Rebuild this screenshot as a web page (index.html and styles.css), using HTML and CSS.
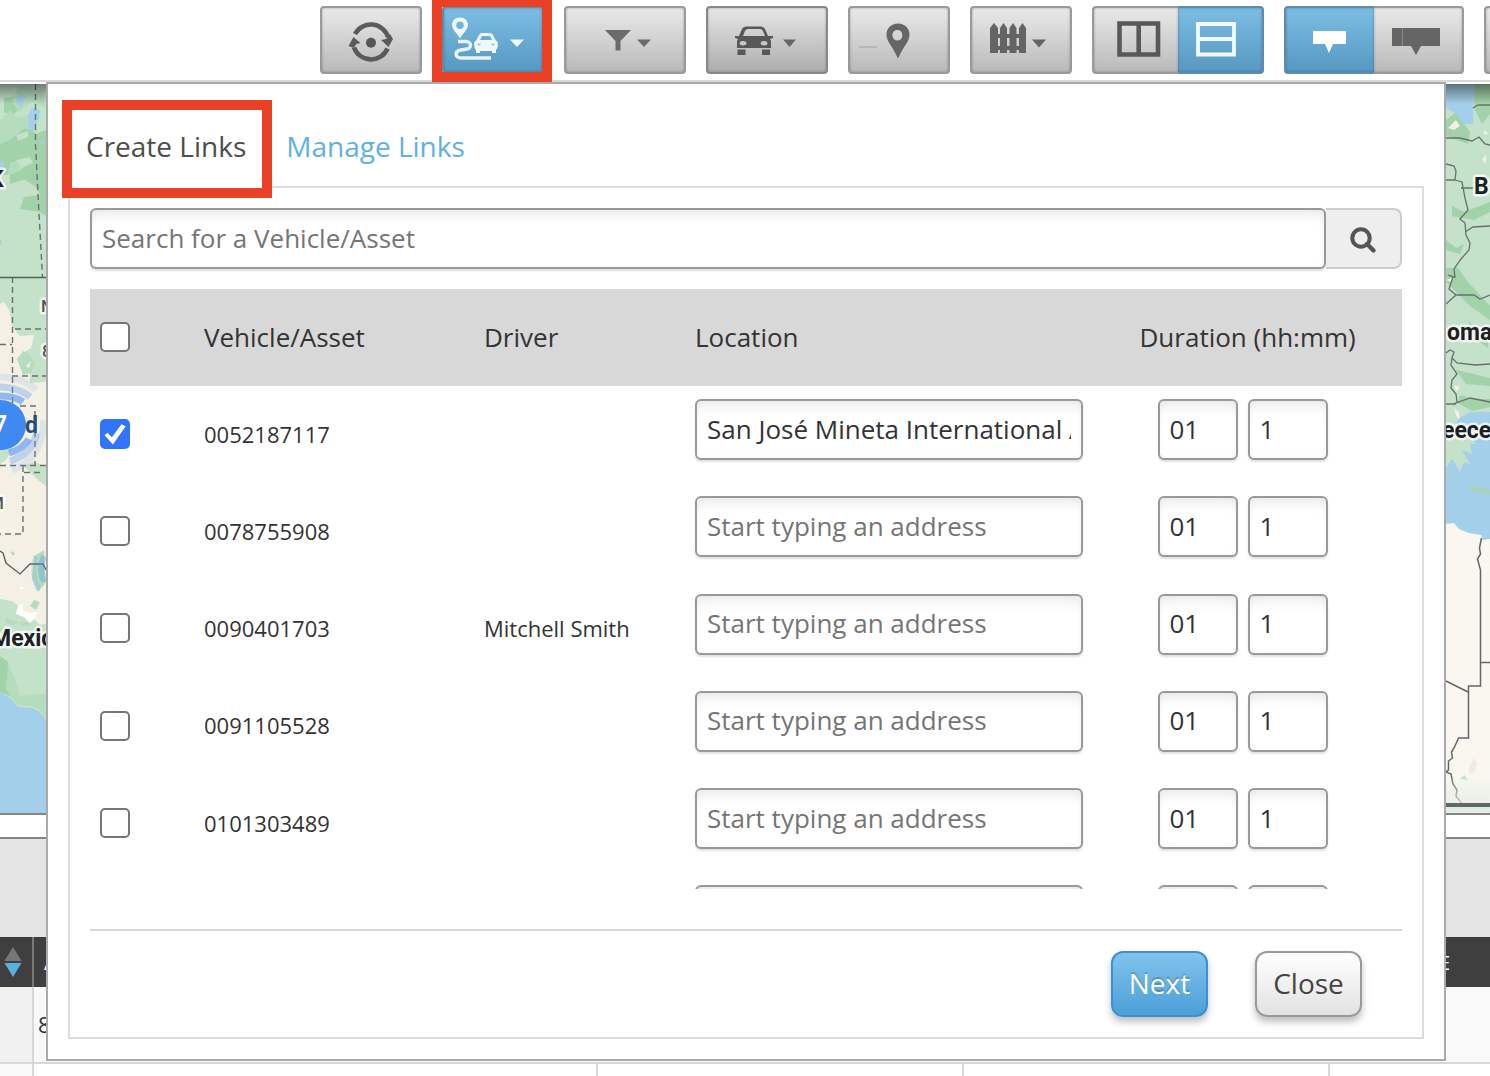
FILE: index.html
```html
<!DOCTYPE html>
<html lang="en">
<head>
<meta charset="utf-8">
<title>Create Links</title>
<link rel="stylesheet" href="styles.css">
</head>
<body>
<div class="page">
  <header class="toolbar">
    <button class="tool w102" aria-label="Refresh"><svg viewBox="322 8 98 64"><g fill="none" stroke="#5a5a5a" stroke-width="4.600"><path d="M355 34A18 18 0 0 1 388 37"/><path d="M387.500 48.500A18 18 0 0 1 354 47.500"/></g><path fill="#5a5a5a" d="M381 40l5-1 4-5 3 5-4.500 8zM348.500 46l5-9 7 6-4 1-3 4z"/><circle cx="371" cy="42.700" r="5" fill="#555"/></svg></button>
    <button class="tool w102 on" aria-label="Links"><svg viewBox="444 8 98 64"><path fill="#f1f8fc" fill-rule="evenodd" d="M460 17.500c5 0 8 3.500 8 7.500 0 4.500-5 8-8 13.500-3-5.500-8-9-8-13.500 0-4 3-7.500 8-7.500zm0 4a3.700 3.700 0 1 0 0 7.500 3.700 3.700 0 0 0 0-7.500z"/><path d="M458 41.500h8c6 0 6 7.500 0 7.800l-5 .7c-7 1-6 8 0 8h30" fill="none" stroke="#e8f4fa" stroke-width="3.400"/><path fill="#f1f8fc" fill-rule="evenodd" d="M476.500 40l2.500-5q1-2 3-2h8q2 0 3 2l2.500 5q2.500 1.500 2.500 4 0 4-2 6v3h-4v-2h-12v2h-4v-3q-2-2-2-6 0-2.500 2.500-4zm3.500 0h12l-2-4h-8z"/><path fill="#9ccae5" d="M477.500 43.500h3v2h-3zM491.500 43.500h3v2h-3z"/><path fill="#f1f8fc" d="M510 39.500h14l-7 7.500z"/></svg></button>
    <button class="tool w122" aria-label="Filter"><svg viewBox="566 8 118 64"><path fill="#6b6b6b" d="M605 30h26l-10.500 11v9.500h-5V41zM637 39.500h14l-7 7.500z"/></svg></button>
    <button class="tool w122 dark" aria-label="Vehicles"><svg viewBox="708 8 118 64"><path fill="#585858" fill-rule="evenodd" d="M739 36l3-7q1-2.500 4-2.500h15q3 0 4 2.500l3 7 5 0v2l-3 1 1 2v7h-34v-7l1-2-3-1v-2zm4 0h22l-2-5q-1-2-3-2h-12q-2 0-3 2zm0 5a3 2 0 1 0 .1 4.500 3 2 0 0 0-.1-4.500zm21 0a3 2 0 1 0 .1 4.500 3 2 0 0 0-.1-4.500zM737.500 49.500h8v5.500h-8zM762 49.500h8v5.500h-8z"/><path fill="#666" d="M783 39.500h13l-6.500 7.500z"/></svg></button>
    <button class="tool w102" aria-label="Places"><svg viewBox="850 8 98 64"><path fill="#666" fill-rule="evenodd" d="M898 23.500c7 0 11.500 5 11.500 11 0 7-5 10-11.500 24-6.500-14-11.500-17-11.500-24 0-6 4.500-11 11.500-11zm0 6.500a5 5.300 0 1 0 0 10.500 5 5.300 0 0 0 0-10.500z"/><path stroke="#aaa" stroke-width="1.300" d="M859 47h18"/></svg></button>
    <button class="tool w102" aria-label="Fences"><svg viewBox="972 8 98 64"><path fill="#646464" d="M990 53V28l4-5 4 5v25zM1000 53V28l3.500-5 3.500 5v25zM1009.500 53V28l3.500-5 3.500 5v25zM1019 53V28l3.500-5 3.500 5v25zM990 34h35v4h-35zM990 46h35v4h-35zM1032 39.500h14l-7 8z"/></svg></button>
    <div class="group">
      <button class="tool w86 first" aria-label="Columns"><svg viewBox="1094 8 84 64"><path fill="none" stroke="#585858" stroke-width="4.600" d="M1119.500 23.500h38.500v31h-38.500zM1138.700 23v32"/></svg></button>
      <button class="tool w86 on last" aria-label="Rows"><svg viewBox="1178 8 84 64"><path fill="none" stroke="#f3f9fc" stroke-width="3.800" d="M1198 24h36v30.500h-36zM1198 39h36"/></svg></button>
    </div>
    <div class="group">
      <button class="tool w90 on first" aria-label="Short label"><svg viewBox="1286 8 88 64"><path fill="#fff" d="M1313 31h33v13h-13l-4 9-4-9h-12z"/></svg></button>
      <button class="tool w90 last" aria-label="Long label"><svg viewBox="1374 8 88 64"><path fill="#656565" d="M1392 28h48v18h-19l-5 9-5-9h-19z"/><path stroke="#8a8a8a" d="M1402.500 28v18"/></svg></button>
    </div>
    <button class="tool w102" aria-label="More"></button>
  </header>

  <main class="backdrop">
    <svg class="map" viewBox="0 84 1490 729" width="1490" height="729">
      <defs>
        <linearGradient id="shade" x1="0" y1="0" x2="0" y2="1"><stop offset="0" stop-color="#000" stop-opacity=".45"/><stop offset="1" stop-color="#000" stop-opacity="0"/></linearGradient>
        <linearGradient id="fade" x1="0" y1="0" x2="0" y2="1"><stop offset="0" stop-color="#e4eee5" stop-opacity="0"/><stop offset="1" stop-color="#e4eee5"/></linearGradient>
      </defs>
      <rect y="84" width="48" height="729" fill="#c3e2c9"/>
      <path fill="#f5f0e5" d="M0 304l4-2 6 10 2 14 8 10 14-1-2 10-8 6 6 14 0 18 16-1v20l2 14v207l-8 2-10-10-10-8-8-6-12-2z"/>
      <path fill="#c3e2c9" d="M0 464l6-4 7-12-5-5-8 6zM24 466l10-4 12 4v20l-8-6zM0 438l8-2 4 6-12 6z"/>
      <path fill="#a1d2a9" d="M0 130l10-6 6 10 12-8 8 8 10-4v44l-10 4-14 2-12 4v-10l-12 2zM26 140l12-6 8 4v78l-6-4-20-3 4-12 16-2-4-8-12-8zM4 98l12-2 4 12-8 8-8-4z"/>
      <path fill="#b5dcbc" d="M20 86l22 4 4 18-14-6-14 10-6-12zM0 120l10-10 8 8 14-4 6 18-14-4-14 12-10 4zM10 163l12-4 4 6-6 6-12 4z"/>
      <path fill="#c3e2c9" d="M16 160l14-3 3 6-12 5zM16 135l12-4 0 6-10 4z"/>
      <path fill="#a4cfea" d="M17 96l10-2-6 14-5-6zM32 108l8 2-1 8-6 13h-4l-1-16zM0 162l4-1v8l-4 2zM0 238l2 8-2-3zM40 143l3-4v5z"/>
      <path fill="#b5dcbc" d="M17 359l8-10 4 6 6 8-4 10-8 2zM34 556l10-6 2 32-8 10-6-14zM34 600l6 2-4 8-6-4zM10 551l5 2-2 3z"/>
      <path fill="#f5f0e5" d="M18 348l5-8 10-2-2 10-6 4zM26 366l5-5-2 7z"/>
      <path fill="#b5dcbc" d="M6 618l12 4-4 3-8-2zM20 622l8 0 2 4-8 0zM0 628l10 0 6 6-16 2z"/>
      <path fill="#fff" d="M18 606l5-3v7l6 3 8-1-2 6-5 5-6-6-8-3zM20 585l5 4-5 0z"/>
      <path fill="#c3e2c9" d="M0 648l14 0 10 8 10 8 7 6 5 3v44H0z"/>
      <path fill="#a1d2a9" d="M0 656l8 6 1 14 4 14-3 6-10-4z"/>
      <path fill="#b5dcbc" d="M8 664l4 8 4 10 4 14 26-2v24l-6-8-8-4-14-1-8-9-4-8z"/>
      <path fill="#a4cfea" d="M0 692l10 6 8 9 14 1 8 4 6 8v93H0z"/>
      <g fill="none" stroke="#6a716f" stroke-width="1.400" stroke-dasharray="6 4"><path d="M35.500 84v60l3 60 4 73M12.500 277v126M15 329h31M0 344.500h12M12 376h34M0 465.500h46M23 466v68H0M24 472.500h20M20 406h15v60"/></g>
      <path fill="none" stroke="#555d5e" stroke-width="1.300" d="M0 277.500h46M0 551l3 2 3 10 14 11 10-10h13l3 6"/>
      <g fill="none" stroke="#5a9af5"><g stroke-width="7"><path d="M0 396c12 0 18 2 23 6" stroke-opacity=".65"/><path d="M0 387c16 0 24 5 30 10" stroke-opacity=".35"/><path d="M0 377c20 0 30 7 36 13" stroke-opacity=".14"/><path d="M29 439q-6 10-20 14" stroke-opacity=".65"/><path d="M37 433q-6 22-27 28" stroke-opacity=".35"/><path d="M44 420q-2 40-32 50" stroke-opacity=".14"/></g><path d="M44 556q-6 14 0 26" stroke-width="6" stroke-opacity=".4"/><path d="M36 556q-6 18 3 34" stroke-width="5" stroke-opacity=".2"/></g>
      <circle cx="1" cy="425" r="25" fill="#3f89f2"/>
      <g class="map-label" stroke="#fff" stroke-opacity=".75" stroke-width="5" stroke-linejoin="round" paint-order="stroke">
        <text x="-6" y="432" class="b" style="fill:#fff;stroke:none">7</text>
        <text x="25" y="433" class="b" style="fill:#284b76;stroke:none">d</text>
        <text x="41" y="312" class="s">N</text><text x="42" y="357" class="s">8</text><text x="-11" y="509" class="s">M</text>
        <text x="-11" y="187" class="b">K</text>
        <text x="-9" y="646" class="b">Mexico</text>
      </g>

      <rect x="1444" y="84" width="46" height="729" fill="#c3e2c9"/>
      <path fill="#a1d2a9" d="M1446 120l10-8 14 20-2 12-22-8zM1474 84h16v30l-8 10-8-16zM1446 268l12 0 10 14 22 24v14l-20-14-24-24zM1452 206l12 6 26-10v10l-16 8-22-4zM1446 240l10 8 8-4-4 10-14-4zM1468 320l10 14 10 8v6l-16-12zM1456 370l18 4 16 4v8l-24-2zM1460 395l12 4 18 0v8l-18 4-14-8z"/>
      <path fill="#f5f0e5" d="M1448 128l8-8 4 6-6 4zM1484 130l5 4-5 0zM1482 160l4-6v10zM1446 280l6-2v4zM1454 408l5 4 1 8-4-4zM1454 385l6 2-4 5z"/>
      <path fill="#a4cfea" d="M1446 84h28l-1 40-10 0-6-10-11-6zM1453 426l7-8 10-6 20 0v135l-16-5-14-6-14-4v-68l8-6z"/>
      <path fill="#c3e2c9" d="M1446 426l8-8 4 8 10 6 8 12-6 0 2 10-10-4 8 14-6-2-4 10-8-14-6 10z"/>
      <path fill="#a8d2bb" d="M1465 486l10 0 15 4v4l-14-1z"/>
      <path fill="#faf7f1" d="M1446 524l8-1 5 6 10 4 12 2 2 5 7-1v268h-44z"/>
      <path fill="#f0ebdc" d="M1469 768l5-10 3 4-2 10-6 2z"/><path fill="#c3e2c9" d="M1460 779l4-4 4 5zM1446 523h5v1h-5z"/>
      <g fill="none" stroke="#68706f" stroke-width="1.300"><path d="M1473 108l5-3h12M1446 138h14l12 3 7-4 6 7 5 1M1446 164l8 2 2 5-1 9h-9M1455 180l7 2 3 16 3 12-8 9 5 4 1 12 4 8-1 7-8 9-7 10 1 8-7-2M1461 188h12M1465 232l8-5 17-1M1453 277l-4 12 7 6-10 9M1456 295l6 0 12 0 6 4 10-4M1446 353l4-3 4 2-2 6 5 5 18 2 15-1M1452 358l-1 7 6 9-5 6-1 8 5 6 1 8-3 3M1446 404h7l17-6 20 4"/></g>
      <g fill="none" stroke="#61676b" stroke-width="1.500"><path d="M1481.500 538l-2 10 1 6-3 5 3 11v116h-12v52h-10l-4 9-3 5 1 6-4 3v9l-3 2M1480 662.500h10M1446 681l22 11M1446 772l5 2 2 10 4 6-1 6 8 10"/></g>
      <rect x="1446" y="774" width="44" height="39" fill="url(#fade)"/>
      <rect x="1446" y="803" width="44" height="4" fill="#666"/>
      <g class="map-label" stroke="#fff" stroke-opacity=".75" stroke-width="5" stroke-linejoin="round" paint-order="stroke">
        <text x="1474" y="194" class="b">B</text><text x="1447" y="340" class="b">omania</text><text x="1442" y="438" class="b">eece</text>
      </g>
      <rect y="84" width="1490" height="20" fill="url(#shade)"/>
    </svg>
    <div class="splitter"></div>
    <div class="filters"></div>
    <div class="grid-head"><div class="sort"><svg viewBox="0 0 18 32" width="18" height="32"><path fill="#777" d="M9 1l8.500 14H.5z"/><path fill="#5bafe0" d="M.5 17h17L9 31z"/></svg></div><div class="col-a">A</div><div class="col-e">E</div></div>
    <div class="grid-row"><div class="rownum"></div><div class="cell">8</div></div>
    <div class="grid-row next"><div class="rownum"></div><div class="cell c1"></div><div class="cell c2"></div><div class="cell c3"></div><div class="cell c4"></div></div>
  </main>

  <section class="dialog">
    <nav class="tabs"><a class="tab active">Create Links</a><a class="tab">Manage Links</a></nav>
    <div class="panel">
      <div class="search"><input class="field" type="text" placeholder="Search for a Vehicle/Asset"><button class="search-btn" aria-label="Search"><svg viewBox="0 0 28 28" width="28" height="28"><circle cx="12" cy="12" r="8.700" fill="none" stroke="#555" stroke-width="4"/><path d="M18 18l6.500 6.500" stroke="#555" stroke-width="4.400" stroke-linecap="round"/></svg></button></div>
      <div class="row head"><input class="check" type="checkbox"><span>Vehicle/Asset</span><span>Driver</span><span>Location</span><span>Duration (hh:mm)</span></div>
      <div class="rows">
        <div class="row"><input class="check" type="checkbox" checked><span>0052187117</span><span></span><input class="field" value="San José Mineta International Airport"><div class="duration"><input class="field" value="01"><input class="field" value="1"></div></div>
        <div class="row"><input class="check" type="checkbox"><span>0078755908</span><span></span><input class="field" placeholder="Start typing an address"><div class="duration"><input class="field" value="01"><input class="field" value="1"></div></div>
        <div class="row"><input class="check" type="checkbox"><span>0090401703</span><span>Mitchell Smith</span><input class="field" placeholder="Start typing an address"><div class="duration"><input class="field" value="01"><input class="field" value="1"></div></div>
        <div class="row"><input class="check" type="checkbox"><span>0091105528</span><span></span><input class="field" placeholder="Start typing an address"><div class="duration"><input class="field" value="01"><input class="field" value="1"></div></div>
        <div class="row"><input class="check" type="checkbox"><span>0101303489</span><span></span><input class="field" placeholder="Start typing an address"><div class="duration"><input class="field" value="01"><input class="field" value="1"></div></div>
        <div class="row"><span></span><span></span><span></span><input class="field"><div class="duration"><input class="field"><input class="field"></div></div>
      </div>
      <footer class="actions"><button class="btn primary">Next</button><button class="btn">Close</button></footer>
    </div>
  </section>

  <div class="highlight highlight-tool"></div>
  <div class="highlight highlight-tab"></div>
</div>
</body>
</html>
```
FILE: styles.css
```css
* { box-sizing: border-box; }
body { margin: 0; font-family: "Open Sans", sans-serif; color: #333; background: #fff; }
button, input { font-family: inherit; margin: 0; }
.page { position: relative; width: 1490px; height: 1076px; overflow: hidden; }

.toolbar { display: flex; gap: 20px; height: 82px; padding: 6px 0 0 320px; border-bottom: 2px solid #d8d8d8; overflow: hidden; }
.tool { flex: none; height: 68px; padding: 0; border: 2px solid #999; border-radius: 4px; background: linear-gradient(#e9e9e9, #bababa); box-shadow: inset 0 0 3px rgba(0, 0, 0, .25); }
.tool svg { display: block; width: 100%; height: 100%; filter: blur(.7px); }
.tool.dark { background: linear-gradient(#e6e6e6, #adadad); border-color: #888; }
.tool.on { background: linear-gradient(#7bbde3, #5798c2); border-color: #5f8ba8; }
.w86 { width: 86px; }
.w90 { width: 90px; }
.w102 { width: 102px; }
.w122 { width: 122px; }
.group { display: flex; flex: none; }
.tool.first { border-right: 0; border-radius: 4px 0 0 4px; }
.tool.last { border-left: 0; border-radius: 0 4px 4px 0; }

.backdrop { padding-top: 2px; }
.map { display: block; }
.map-label { font-family: Roboto, sans-serif; fill: #1d2022; }
.map-label .b { font-size: 23px; font-weight: 700; }
.map-label .s { font-size: 17px; fill: #555; font-weight: 500; }
.splitter { height: 26px; border-top: 2px solid #858585; border-bottom: 2px solid #858585; }
.filters { height: 98px; background: #e4e4e4; }
.grid-head { display: flex; height: 50px; background: #3f3f3f; color: #fff; font-size: 20px; line-height: 52px; }
.sort { display: flex; align-items: center; width: 34px; padding-left: 4px; border-right: 2px solid #777; }
.col-a { width: 1403px; padding-left: 10px; }
.col-e { padding-left: 2px; }
.grid-row { display: flex; height: 77px; border-bottom: 2px solid #d8d8d8; background: #f9f9f9; font-size: 22px; line-height: 74px; }
.rownum { flex: none; width: 34px; background: #f0f0f0; border-right: 2px solid #d8d8d8; }
.grid-row .cell { flex: none; padding-left: 4px; }
.grid-row.next { background: #fff; }
.next .rownum { background: #f9f9f9; }
.next .cell { border-right: 2px solid #d8d8d8; }
.next .c1 { width: 564px; }
.next .c2, .next .c3, .next .c4 { width: 366px; }

.dialog { position: absolute; left: 46px; top: 82px; width: 1400px; height: 979px; padding: 0 20px; background: #fff; border: 2px solid #aaa; }
.tabs { display: flex; height: 102px; font-size: 28px; line-height: 124px; }
.tab { color: #5fb1e2; }
.tab.active { z-index: 1; height: 104px; margin-right: 20px; padding: 0 20px 0 18px; background: #fff; color: #4d4d4d; }
.panel { height: 853px; padding: 20px; border: 2px solid #ddd; }

.field { width: 100%; height: 61px; padding: 0 10px 2px; border: 2px solid #999; border-radius: 6px; background: #fff; color: #333; font-size: 26px; outline: 0; box-shadow: inset 0 12px 14px -8px rgba(0, 0, 0, .09), inset 0 0 7px rgba(0, 0, 0, .03), 0 2px 2px rgba(0, 0, 0, .12); }
.field::placeholder { color: #757575; opacity: 1; }
.search { display: flex; height: 61px; margin-bottom: 20px; }
.search-btn { display: flex; flex: none; align-items: center; justify-content: center; width: 76px; padding: 2px 0 0; border: 2px solid #ccc; border-left: 0; border-radius: 0 8px 8px 0; background: #eee; }
.row { display: grid; grid-template-columns: 104px 280px 211px 388px 1fr; align-items: center; height: 97.25px; padding-left: 10px; font-size: 22px; }
.row span { padding-bottom: 2px; }
.row.head { height: 97px; background: #d8d8d8; font-size: 26px; }
.row.head span:last-child { padding-left: 56.5px; }
.rows { height: 503px; overflow: hidden; }
.row .duration { display: flex; gap: 10px; padding-left: 75px; }
.rows .field { margin-bottom: 10px; }
.duration .field { width: 80px; padding-left: 9.5px; }
.check { appearance: none; width: 30px; height: 30px; margin-bottom: 1.5px; border: 2px solid #767676; border-radius: 5px; background: #fff; }
.check:checked { border-color: #3075f7; background: #3075f7; }
.check:checked::after { content: ""; display: block; width: 26px; height: 26px; background: #fff; clip-path: polygon(10% 55%, 21% 46%, 38% 63%, 75% 13%, 91% 21%, 42% 91%); }

.actions { display: flex; justify-content: flex-end; gap: 47px; margin-top: 40px; padding: 20px 40px 0 0; border-top: 2px solid #d8d8d8; }
.btn { width: 107px; height: 66px; padding: 0 0 2px; border: 2px solid #999; border-radius: 12px; background: linear-gradient(#fff, #e2e2e2); color: #444; font-size: 28px; box-shadow: 0 5px 7px rgba(0, 0, 0, .25); }
.btn.primary { width: 97px; border-color: #3c90d4; background: linear-gradient(#80c4ec, #4c9fd9); color: #fff; text-shadow: 0 -2px 1px rgba(0, 0, 0, .2); }

.highlight { position: absolute; z-index: 2; border: 10px solid #ea4026; }
.highlight-tool { left: 432px; top: 0; width: 120px; height: 82px; border-top-width: 7px; }
.highlight-tab { left: 62px; top: 100px; width: 210px; height: 98px; }
```
